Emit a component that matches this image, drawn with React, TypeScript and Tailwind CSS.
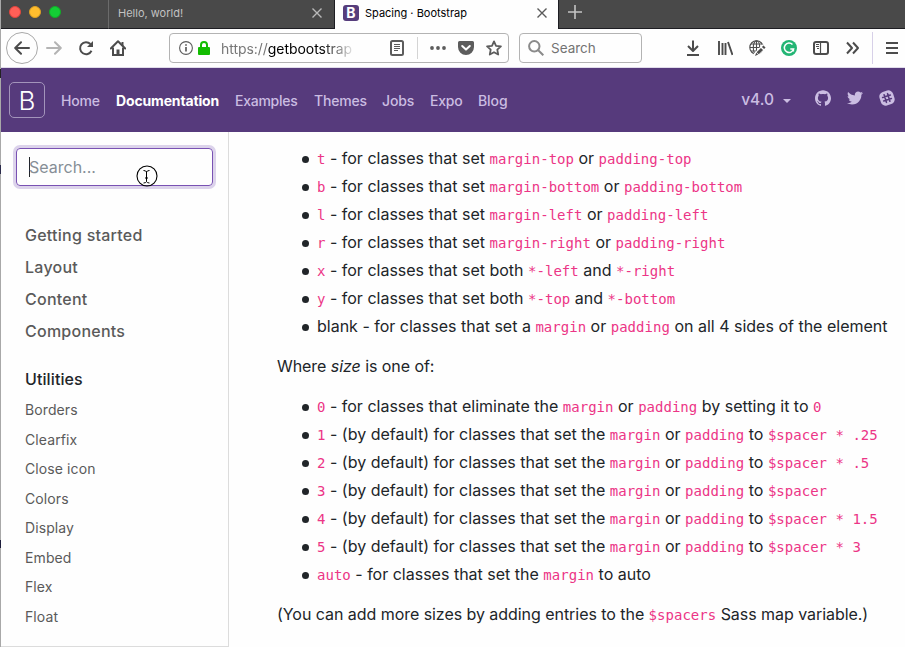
import type { ReactNode } from "react";
import { SiGithub } from "react-icons/si";
import { FaTwitter } from "react-icons/fa";

const navLinks = [
  { label: "Home", cls: "font-medium tracking-[-0.2px] w-[39px]" },
  { label: "Documentation", cls: "font-bold tracking-[-0.15px] text-white w-[103px]" },
  { label: "Examples", cls: "font-medium tracking-[-0.25px] w-[63px]" },
  { label: "Themes", cls: "font-medium tracking-[-0.2px] w-[52px]" },
  { label: "Jobs", cls: "font-medium tracking-[-0.1px] w-[32px]" },
  { label: "Expo", cls: "font-medium tracking-[-0.2px] w-[32px]" },
  { label: "Blog", cls: "font-medium tracking-[-0.1px] w-[30px]" },
];

const sections = ["Getting started", "Layout", "Content", "Components"];
const utilities = ["Borders", "Clearfix", "Close icon", "Colors", "Display", "Embed", "Flex", "Float"];

function Code({ children }: { children: ReactNode }) {
  return (
    <code className="font-['DejaVu_Sans_Mono',monospace] text-[14px] leading-none tracking-[0.02px] text-[#ec3586]">
      {children}
    </code>
  );
}

function Item({ children }: { children: ReactNode }) {
  return (
    <li className="flex h-6 items-center whitespace-nowrap">
      <span className="mt-[2px] mr-[8px] h-[7px] w-[7px] shrink-0 rounded-full bg-[#212529]" />
      <span className="leading-6">{children}</span>
    </li>
  );
}

function Close({ className }: { className: string }) {
  return (
    <svg width="10" height="10" viewBox="0 0 10 10" className={className} stroke="currentColor" strokeWidth="1.4">
      <path d="M0.5 0.5l9 9M9.5 0.5l-9 9" />
    </svg>
  );
}

function TabBar() {
  return (
    <div className="flex h-[29px] shrink-0 bg-[#494949] text-[11px]">
      <div className="flex w-[108px] shrink-0 gap-2 border-r border-b border-r-[#6b6b6b] border-b-[#1d1d22] pt-[6px] pl-2">
        <span className="h-3 w-3 rounded-full border border-[#e0443e] bg-[#ff5f57]" />
        <span className="h-3 w-3 rounded-full border border-[#dea123] bg-[#ffbd2e]" />
        <span className="h-3 w-3 rounded-full border border-[#12ac28] bg-[#14cd35]" />
      </div>
      <div className="flex w-[226px] shrink-0 items-center border-r border-b border-[#1d1d22] pr-[12px] pb-[2px] pl-[9px] text-[#c2c2c2]">
        <span className="grow">Hello, world!</span>
        <Close className="text-[#b9b9b9]" />
      </div>
      <div className="flex w-[223px] shrink-0 items-center bg-[#fefefe] pr-[11px] pb-[3px] pl-2 text-black">
        <span className="mr-[6px] flex h-4 w-4 items-center justify-center rounded-[3px] bg-[#563d7c] text-[14px] leading-none font-bold text-white">
          B
        </span>
        <span className="grow">Spacing · Bootstrap</span>
        <Close className="text-[#5a5a5a]" />
      </div>
      <div className="flex grow border-b border-l border-[#1d1d22] pt-[5px] pl-[9px]">
        <svg width="14" height="14" viewBox="0 0 14 14" stroke="#c4c4c4" strokeWidth="1.6">
          <path d="M7 0v14M0 7h14" />
        </svg>
      </div>
    </div>
  );
}

function Toolbar() {
  return (
    <div className="flex h-[39px] shrink-0 items-center border-b border-[#e0dcea] bg-[#fefefe] text-[#4c4c4c]">
      <div className="ml-[5px] flex h-8 w-8 shrink-0 items-center justify-center rounded-full border border-[#a9a9a9]">
        <svg width="16" height="14" viewBox="0 0 16 14" fill="none" stroke="currentColor" strokeWidth="2" strokeLinecap="round" strokeLinejoin="round">
          <path d="M15 7H1.5M7 1.2L1.2 7L7 12.8" />
        </svg>
      </div>
      <svg className="ml-2 shrink-0 text-[#b4b4b4]" width="16" height="14" viewBox="0 0 16 14" fill="none" stroke="currentColor" strokeWidth="2" strokeLinecap="round" strokeLinejoin="round">
        <path d="M1 7h13.5M9 1.2L14.8 7L9 12.8" />
      </svg>
      <svg className="ml-4 shrink-0" width="16" height="16" viewBox="0 0 16 16" fill="none" stroke="currentColor" strokeWidth="2">
        <path d="M13.5 10.8A6 6 0 1 1 12.4 4" />
        <path d="M15 1v6H9z" fill="currentColor" stroke="none" />
      </svg>
      <svg className="ml-4 shrink-0" width="16" height="16" viewBox="0 0 16 16" fill="none" stroke="currentColor" strokeWidth="2">
        <path d="M0.8 8.5L8 1.3L15.2 8.5" strokeLinejoin="round" strokeLinecap="round" />
        <path d="M3 7.5V15h10V7.5M12.5 2v4" />
        <path d="M6.5 9.5h3V15h-3z" fill="currentColor" stroke="none" />
      </svg>

      <div className="ml-[43px] flex h-[30px] w-[340px] shrink-0 items-center rounded-[4px] border border-[#b3b3b3]">
        <svg className="ml-[9px] shrink-0" width="14" height="14" viewBox="0 0 14 14" fill="none" stroke="#5c5c5c">
          <circle cx="7" cy="7" r="6.4" strokeWidth="1.1" />
          <path d="M7 6v4.6M7 3.2v1.6" strokeWidth="1.7" />
        </svg>
        <svg className="ml-[5px] shrink-0" width="12" height="14" viewBox="0 0 12 14">
          <path d="M3 7V4a3 3 0 0 1 6 0v3" fill="none" stroke="#12bc00" strokeWidth="2" />
          <rect y="6" width="12" height="8" rx="1" fill="#12bc00" />
        </svg>
        <span className="ml-[11px] w-[132px] shrink-0 [mask-image:linear-gradient(to_right,black_100px,transparent_135px)] text-[14px] tracking-[-0.05px] text-[#777]">
          https://<span className="text-black">getbootstrap</span>
        </span>
        <svg className="ml-[37px] shrink-0" width="14" height="16" viewBox="0 0 14 16" fill="none" stroke="#5c5c5c">
          <rect x="1" y="1" width="12" height="14" rx="1.5" strokeWidth="2" />
          <path d="M4 4.5h6M4 6.5h6M4 8.5h6M4 10.5h4" />
        </svg>
        <span className="ml-[13px] h-[22px] w-px shrink-0 bg-[#d4d4d4]" />
        <svg className="ml-3 shrink-0" width="16" height="4" viewBox="0 0 16 4" fill="#5c5c5c">
          <circle cx="2" cy="2" r="1.9" />
          <circle cx="8" cy="2" r="1.9" />
          <circle cx="14" cy="2" r="1.9" />
        </svg>
        <svg className="ml-3 shrink-0" width="16" height="14" viewBox="0 0 16 14">
          <path d="M1.5 0h13A1.5 1.5 0 0 1 16 1.5V6A8 8 0 0 1 0 6V1.5A1.5 1.5 0 0 1 1.5 0z" fill="#5c5c5c" />
          <path d="M4.2 5L8 8.6L11.8 5" fill="none" stroke="#fff" strokeWidth="2" strokeLinecap="round" strokeLinejoin="round" />
        </svg>
        <svg className="ml-3 shrink-0" width="16" height="16" viewBox="0 0 16 16">
          <path d="M8 1.4l2 4.4 4.900.6-3.600 3.300.9 4.800L8 12.200l-4.200 2.300.9-4.800L1.100 6.400 6 5.800z" fill="none" stroke="#5c5c5c" strokeWidth="1.8" strokeLinejoin="round" />
        </svg>
      </div>

      <div className="ml-[10px] flex h-[30px] w-[123px] shrink-0 items-center rounded-[4px] border border-[#b3b3b3]">
        <svg className="ml-2 shrink-0" width="16" height="16" viewBox="0 0 16 16" fill="none" stroke="#8a8a8a" strokeWidth="2">
          <circle cx="6.3" cy="6.3" r="5.2" />
          <path d="M10 10l5.3 5.3" />
        </svg>
        <span className="mt-px ml-[7px] text-[13.5px] text-[#737373]">Search</span>
      </div>

      <div className="ml-[43px] flex shrink-0 items-center gap-4">
        <svg width="16" height="16" viewBox="0 0 16 16" fill="none" stroke="currentColor" strokeWidth="2">
          <path d="M8 0.5v10M3 6l5 5 5-5" strokeLinejoin="round" />
          <path d="M2 15h12" />
        </svg>
        <svg width="16" height="16" viewBox="0 0 16 16" fill="none" stroke="currentColor">
          <path d="M2 1v14M5.500 3v12M8.500 3v12M11 2l4.500 13" strokeWidth="1.900" />
        </svg>
        <svg width="17" height="16" viewBox="0 0 17 16" fill="none" stroke="currentColor" strokeWidth="1.1">
          <circle cx="7.500" cy="7.500" r="6.700" />
          <ellipse cx="7.500" cy="7.500" rx="3.200" ry="6.700" />
          <path d="M7.500 1v13M1 7.500h13M2 4h11M2 11h11" />
          <path d="M6 16l9.500-10" stroke="#fefefe" strokeWidth="5" />
          <path d="M8.700 13.300L13 9M14 8l1.500-1.500" strokeWidth="3" />
          <path d="M6 15.900l1.200-3.200 2 1.900z" fill="currentColor" stroke="none" />
        </svg>
        <svg className="-ml-px" width="16" height="16" viewBox="0 0 16 16" fill="none">
          <circle cx="8" cy="8" r="8" fill="#23b574" />
          <path d="M11.500 4.600A4.700 4.700 0 1 0 12.600 9H9.300M12.400 8.500v3" stroke="#fff" strokeWidth="1.500" />
        </svg>
        <svg width="16" height="14" viewBox="0 0 16 14" fill="none" stroke="currentColor">
          <rect x="1" y="1" width="14" height="12" rx="2" strokeWidth="2" />
          <path d="M7.500 1v12" strokeWidth="1.200" />
          <path d="M3 3.500h3M3 5.500h3M4 7.500h2" />
        </svg>
        <svg width="16" height="14" viewBox="0 0 16 14" fill="none" stroke="currentColor" strokeWidth="2" strokeLinejoin="round">
          <path d="M2 1.500L7 7l-5 5.500M8 1.500L13 7l-5 5.500" />
        </svg>
      </div>
      <span className="ml-[11px] h-8 w-px shrink-0 bg-[#d7d0e8]" />
      <svg className="ml-[13px] shrink-0" width="12" height="12" viewBox="0 0 12 12" fill="currentColor">
        <path d="M0 0h12v2H0zM0 5h12v2H0zM0 10h12v2H0z" />
      </svg>
    </div>
  );
}

function Navbar() {
  return (
    <div className="flex h-16 shrink-0 items-center bg-[#563a7c] text-[14px] text-[#cbbde2]">
      <div className="ml-2 flex h-9 w-9 shrink-0 items-center justify-center rounded-[5px] border border-[#a394bb] pt-px text-[26px] leading-none font-light text-white">
        B
      </div>
      <nav className="ml-4 flex gap-4 whitespace-nowrap">
        {navLinks.map((l) => (
          <a key={l.label} className={l.cls}>
            {l.label}
          </a>
        ))}
      </nav>
      <div className="ml-auto flex items-center pr-[10px]">
        <span className="text-[15.5px] font-medium">v4.0</span>
        <span className="mt-px ml-[9px] h-0 w-0 border-x-4 border-t-4 border-x-transparent border-t-[#cbbde2]" />
        <SiGithub className="mb-[4px] ml-6" size={16} />
        <FaTwitter className="mb-[4px] ml-4" size={16} />
        <svg className="mb-[4px] ml-4" width="16" height="16" viewBox="0 0 16 16">
          <rect x="0.900" y="0.900" width="14.200" height="14.200" rx="4.800" fill="#cbbde2" transform="rotate(-17 8 8)" />
          <g transform="rotate(-17 8 8)" stroke="#563a7c" strokeWidth="1.600" strokeLinecap="round">
            <path d="M6.200 4v8M9.800 4v8M4 6.200h8M4 9.800h8" />
          </g>
        </svg>
      </div>
    </div>
  );
}

function Sidebar() {
  return (
    <aside className="flex w-[228px] shrink-0 flex-col border-r border-b border-[#dcdcdc] text-[#5a5a5a]">
      <div className="relative mt-4 ml-[15px] flex h-[38px] w-[197px] shrink-0 items-center rounded-[4px] border border-[#7952b3] pl-3 text-[16px] text-[#868e96] shadow-[0_0_0_3px_rgba(121,82,179,0.25)]">
        <span className="mr-[-1px] h-5 w-px bg-[#212529]" />
        Search...
        <svg className="absolute top-[16px] left-[119px]" width="22" height="22" viewBox="0 0 22 22" fill="none" stroke="#000">
          <circle cx="11" cy="11" r="10" strokeWidth="1.100" />
          <path d="M7.500 5.500Q10 5.500 10.500 7Q11 5.500 13.500 5.500M10.500 6.500v10M9 13h3M7.500 18Q10 18 10.500 16.500Q11 18 13.500 18" />
        </svg>
      </div>
      <div className="mt-[33px] ml-6 flex flex-col text-[16px] font-[450] tracking-[0.25px]">
        {sections.map((s) => (
          <a key={s} className="leading-8">
            {s}
          </a>
        ))}
        <a className="mt-4 leading-8 font-medium tracking-[0.1px] text-[#212529]">Utilities</a>
      </div>
      <div className="ml-6 flex flex-col text-[14px] tracking-[0.1px]">
        {utilities.map((u) => (
          <a key={u} className="leading-[29.5px]">
            {u}
          </a>
        ))}
      </div>
    </aside>
  );
}

const multipliers = [" * .25", " * .5", "", " * 1.5", " * 3"];
const sides = [
  ["t", "top"],
  ["b", "bottom"],
  ["l", "left"],
  ["r", "right"],
];

function Docs() {
  return (
    <main className="flex grow flex-col pt-[14px] pl-12 text-[16px] whitespace-nowrap text-[#212529]">
      <ul className="flex flex-col gap-1 pl-[25px]">
        {sides.map(([key, side]) => (
          <Item key={key}>
            <Code>{key}</Code> - for classes that set <Code>margin-{side}</Code> or <Code>padding-{side}</Code>
          </Item>
        ))}
        <Item>
          <Code>x</Code> - for classes that set both <Code>*-left</Code> and <Code>*-right</Code>
        </Item>
        <Item>
          <Code>y</Code> - for classes that set both <Code>*-top</Code> and <Code>*-bottom</Code>
        </Item>
        <Item>
          blank - for classes that set a <Code>margin</Code> or <Code>padding</Code> on all 4 sides of the element
        </Item>
      </ul>
      <p className="mt-4 leading-6 tracking-[-0.06px]">
        Where <em>size</em> is one of:
      </p>
      <ul className="mt-4 flex flex-col gap-1 pl-[25px]">
        <Item>
          <Code>0</Code> - for classes that eliminate the <Code>margin</Code> or <Code>padding</Code> by setting it to{" "}
          <Code>0</Code>
        </Item>
        {multipliers.map((m, i) => (
          <Item key={i}>
            <Code>{i + 1}</Code> - (by default) for classes that set the <Code>margin</Code> or <Code>padding</Code> to{" "}
            <Code>$spacer{m}</Code>
          </Item>
        ))}
        <Item>
          <Code>auto</Code> - for classes that set the <Code>margin</Code> to auto
        </Item>
      </ul>
      <p className="mt-4 leading-6 tracking-[-0.05px]">
        (You can add more sizes by adding entries to the <Code>$spacers</Code> Sass map variable.)
      </p>
    </main>
  );
}

export default function App() {
  return (
    <div className="flex h-[647px] w-[905px] overflow-hidden bg-[#fefefe] font-['Inter','Liberation_Sans',sans-serif]">
      <div className="flex w-px shrink-0 flex-col bg-[#a8a8a8]">
        <span className="mt-[69px] h-[9px] bg-[#222]" />
        <span className="mt-[87px] h-[9px] bg-[#2a2a4a]" />
        <span className="mt-[366px] h-2 bg-[#1c1c3a]" />
      </div>
      <div className="flex w-[904px] flex-col">
        <TabBar />
        <Toolbar />
        <Navbar />
        <div className="flex grow">
          <Sidebar />
          <Docs />
        </div>
      </div>
    </div>
  );
}
